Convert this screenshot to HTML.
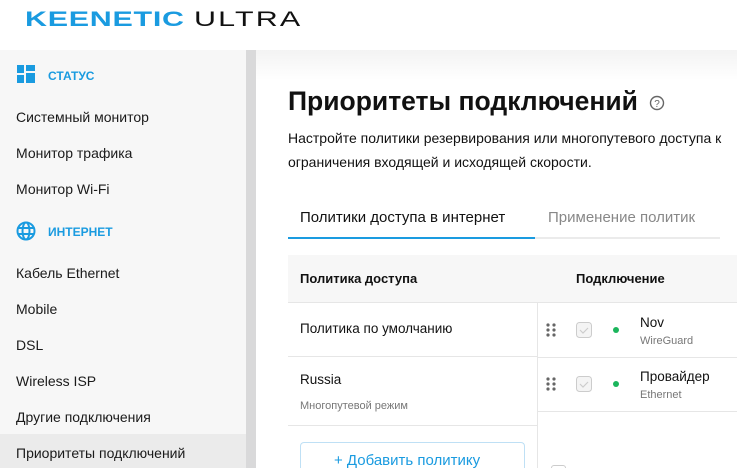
<!DOCTYPE html>
<html><head><meta charset="utf-8"><style>
*{margin:0;padding:0;box-sizing:border-box}
html,body{width:737px;height:468px;overflow:hidden}
body{background:#fff;font-family:"Liberation Sans",sans-serif;color:#111;position:relative}
.a{position:absolute;white-space:nowrap}
.logo{left:25px;top:8px;font-size:21px;font-weight:bold;transform:scaleX(1.45);transform-origin:0 0;letter-spacing:0.5px}
.side{left:0;top:50px;width:246px;height:418px;background:#f7f7f7}
.bar{left:246px;top:50px;width:10px;height:418px;background:#d9d9da}
.main{left:256px;top:50px;width:481px;height:418px;background:linear-gradient(#f3f3f3,#fff 30px)}
.it{left:16px;font-size:14px;color:#1a1a1a}
.sec{left:48px;font-size:12px;font-weight:bold;color:#1a9be0}
.sel{left:0;top:434px;width:246px;height:34px;background:#ebebeb}
</style></head><body>
<div class="a logo"><span style="color:#1a9be0">KEENETIC</span> <span style="font-weight:normal;letter-spacing:1.5px">ULTRA</span></div>
<div class="a side"></div><div class="a bar"></div><div class="a main"></div>
<div class="a sel"></div>
<svg class="a" style="left:17px;top:65px" width="19" height="19"><rect x="0" y="0" width="7" height="8" fill="#1a9be0"/><rect x="9" y="0" width="9" height="6" fill="#1a9be0"/><rect x="0" y="10" width="7" height="8" fill="#1a9be0"/><rect x="9" y="8" width="9" height="10" fill="#1a9be0"/></svg>
<div class="a sec" style="top:69px">СТАТУС</div>
<div class="a it" style="top:109px">Системный монитор</div>
<div class="a it" style="top:145px">Монитор трафика</div>
<div class="a it" style="top:181px">Монитор Wi-Fi</div>
<svg class="a" style="left:16px;top:221px" width="20" height="20" fill="none" stroke="#1a9be0" stroke-width="2"><circle cx="10" cy="10" r="8.5"/><ellipse cx="10" cy="10" rx="3.5" ry="8.5"/><line x1="1.5" y1="7" x2="18.5" y2="7"/><line x1="1.5" y1="13" x2="18.5" y2="13"/></svg>
<div class="a sec" style="top:225px">ИНТЕРНЕТ</div>
<div class="a it" style="top:265px">Кабель Ethernet</div>
<div class="a it" style="top:301px">Mobile</div>
<div class="a it" style="top:337px">DSL</div>
<div class="a it" style="top:373px">Wireless ISP</div>
<div class="a it" style="top:409px">Другие подключения</div>
<div class="a it" style="top:445px">Приоритеты подключений</div>

<div class="a" style="left:288px;top:86px;font-size:26.5px;font-weight:bold">Приоритеты подключений</div>
<svg class="a" style="left:649px;top:95px" width="16" height="16"><circle cx="8" cy="8" r="6.5" fill="none" stroke="#666" stroke-width="1.4"/><text x="8" y="12" font-size="10" text-anchor="middle" fill="#666" font-family="Liberation Sans">?</text></svg>
<div class="a" style="left:288px;top:130px;font-size:14px">Настройте политики резервирования или многопутевого доступа к</div>
<div class="a" style="left:288px;top:154px;font-size:14px">ограничения входящей и исходящей скорости.</div>

<div class="a" style="left:300px;top:209px;font-size:15px">Политики доступа в интернет</div>
<div class="a" style="left:548px;top:209px;font-size:15px;color:#888">Применение политик</div>
<div class="a" style="left:288px;top:237px;width:432px;height:2px;background:#ebebeb"></div>
<div class="a" style="left:288px;top:237px;width:247px;height:2px;background:#1a9be0"></div>

<div class="a" style="left:288px;top:255px;width:449px;height:48px;background:#f7f7f7;border-bottom:1px solid #e6e6e6"></div>
<div class="a" style="left:300px;top:271px;font-size:13px;font-weight:bold">Политика доступа</div>
<div class="a" style="left:576px;top:271px;font-size:13px;font-weight:bold">Подключение</div>
<div class="a" style="left:288px;top:356px;width:249px;height:1px;background:#e6e6e6"></div>
<div class="a" style="left:288px;top:425px;width:249px;height:1px;background:#e6e6e6"></div>
<div class="a" style="left:537px;top:303px;width:1px;height:165px;background:#e6e6e6"></div>
<div class="a" style="left:538px;top:357px;width:199px;height:1px;background:#e6e6e6"></div>
<div class="a" style="left:538px;top:411px;width:199px;height:1px;background:#e6e6e6"></div>
<div class="a" style="left:300px;top:321px;font-size:13.5px">Политика по умолчанию</div>
<div class="a" style="left:300px;top:372px;font-size:13.5px">Russia</div>
<div class="a" style="left:300px;top:400px;font-size:11px;color:#777">Многопутевой режим</div>
<div class="a" style="left:300px;top:442px;width:225px;height:26px;border:1px solid #bfe0f5;border-bottom:none;border-radius:4px 4px 0 0"></div>
<div class="a" style="left:334px;top:452px;font-size:15px;color:#1a9be0">+ Добавить политику</div>

<svg class="a" style="left:546px;top:323px" width="12" height="14" fill="#666"><circle cx="2" cy="2" r="1.6"/><circle cx="8" cy="2" r="1.6"/><circle cx="2" cy="7" r="1.6"/><circle cx="8" cy="7" r="1.6"/><circle cx="2" cy="12" r="1.6"/><circle cx="8" cy="12" r="1.6"/></svg>
<svg class="a" style="left:546px;top:377px" width="12" height="14" fill="#666"><circle cx="2" cy="2" r="1.6"/><circle cx="8" cy="2" r="1.6"/><circle cx="2" cy="7" r="1.6"/><circle cx="8" cy="7" r="1.6"/><circle cx="2" cy="12" r="1.6"/><circle cx="8" cy="12" r="1.6"/></svg>
<svg class="a" style="left:576px;top:322px" width="17" height="17"><rect x="0.5" y="0.5" width="15" height="15" rx="3" fill="#f4f4f4" stroke="#ccc"/><path d="M4 8l3 3 5-5" fill="none" stroke="#ccc" stroke-width="1.2"/></svg>
<svg class="a" style="left:576px;top:376px" width="17" height="17"><rect x="0.5" y="0.5" width="15" height="15" rx="3" fill="#f4f4f4" stroke="#ccc"/><path d="M4 8l3 3 5-5" fill="none" stroke="#ccc" stroke-width="1.2"/></svg>
<div class="a" style="left:613px;top:327px;width:6px;height:6px;border-radius:50%;background:#1bb55c"></div>
<div class="a" style="left:613px;top:381px;width:6px;height:6px;border-radius:50%;background:#1bb55c"></div>
<div class="a" style="left:640px;top:315px;font-size:13.5px">Nov</div>
<div class="a" style="left:640px;top:335px;font-size:11px;color:#777">WireGuard</div>
<div class="a" style="left:640px;top:369px;font-size:13.5px">Провайдер</div>
<div class="a" style="left:640px;top:389px;font-size:11px;color:#777">Ethernet</div>
<div class="a" style="left:551px;top:465px;width:15px;height:3px;border:1px solid #ccc;border-bottom:none;border-radius:3px 3px 0 0"></div>
</body></html>
